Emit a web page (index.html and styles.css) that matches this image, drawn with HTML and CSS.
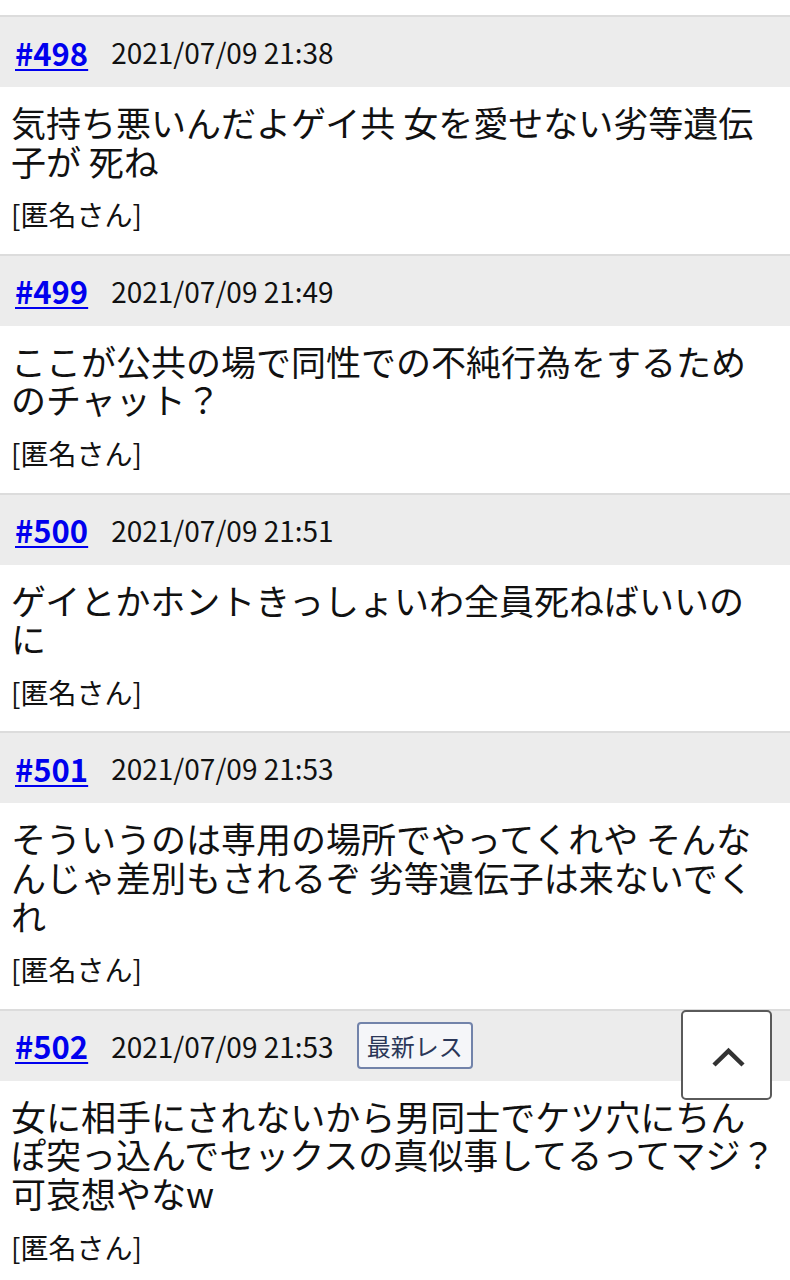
FILE: index.html
```html
<!DOCTYPE html>
<html lang="ja">
<head>
<meta charset="utf-8">
<title>スレッド</title>
<link rel="stylesheet" href="styles.css">
</head>
<body>
<div class="thread">
  <article class="post">
    <div class="post-head"><a class="num" href="#">#498</a><span class="date">2021/07/09 21:38</span></div>
    <div class="post-body">
      <p class="text">気持ち悪いんだよゲイ共 女を愛せない劣等遺伝子が 死ね</p>
      <p class="name">[匿名さん]</p>
    </div>
  </article>
  <article class="post">
    <div class="post-head"><a class="num" href="#">#499</a><span class="date">2021/07/09 21:49</span></div>
    <div class="post-body">
      <p class="text">ここが公共の場で同性での不純行為をするためのチャット？</p>
      <p class="name">[匿名さん]</p>
    </div>
  </article>
  <article class="post">
    <div class="post-head"><a class="num" href="#">#500</a><span class="date">2021/07/09 21:51</span></div>
    <div class="post-body">
      <p class="text">ゲイとかホントきっしょいわ全員死ねばいいのに</p>
      <p class="name">[匿名さん]</p>
    </div>
  </article>
  <article class="post">
    <div class="post-head"><a class="num" href="#">#501</a><span class="date">2021/07/09 21:53</span></div>
    <div class="post-body">
      <p class="text">そういうのは専用の場所でやってくれや そんなんじゃ差別もされるぞ 劣等遺伝子は来ないでくれ</p>
      <p class="name">[匿名さん]</p>
    </div>
  </article>
  <article class="post">
    <div class="post-head"><a class="num" href="#">#502</a><span class="date">2021/07/09 21:53</span><span class="badge">最新レス</span></div>
    <div class="post-body">
      <p class="text">女に相手にされないから男同士でケツ穴にちんぽ突っ込んでセックスの真似事してるってマジ<span class="hang">？</span>可哀想やなw</p>
      <p class="name">[匿名さん]</p>
    </div>
  </article>
</div>
<button class="to-top" type="button" aria-label="ページトップへ">
  <svg width="87" height="86" viewBox="0 0 87 86"><polyline points="31,53 45.5,39 60,53" fill="none" stroke="#333" stroke-width="4.5"/></svg>
</button>
</body>
</html>
```
FILE: styles.css
```css
html, body {
  margin: 0;
  padding: 0;
  background: #fff;
}
body {
  font-family: "Noto Sans CJK JP", sans-serif;
  color: #111;
}
.thread {
  padding-top: 15px;
}
.post {
  border-top: 2px solid #dcdcdc;
}
.post-head {
  height: 70px;
  background: #ececec;
  display: flex;
  align-items: center;
  padding-left: 15px;
}
.num {
  font-size: 31px;
  font-weight: 700;
  color: #0000ee;
  text-decoration: underline;
  text-decoration-thickness: 2px;
  text-underline-offset: 3px;
  line-height: 1;
}
.date {
  font-size: 28px;
  margin-left: 23px;
  color: #111;
}
.badge {
  margin-left: 23px;
  box-sizing: border-box;
  height: 47px;
  padding: 0 8px;
  display: flex;
  align-items: center;
  border: 2px solid #7283aa;
  border-radius: 4px;
  background: #f5f6f9;
  color: #2b3758;
  font-size: 24px;
}
.post-body {
  padding: 16px 17px 20.6px 11px;
}
.text {
  margin: 0;
  font-size: 35px;
  line-height: 38.6px;
}
.hang {
  display: inline-block;
  width: 0;
  white-space: nowrap;
}
.name {
  margin: 15px 0 0;
  font-size: 28px;
  line-height: 38px;
}
.to-top {
  position: fixed;
  left: 681px;
  top: 1010px;
  width: 91px;
  height: 90px;
  padding: 0;
  background: #fff;
  border: 2px solid #5a5a5a;
  border-radius: 5px;
  display: flex;
  align-items: center;
  justify-content: center;
}
.to-top svg {
  display: block;
}
```
